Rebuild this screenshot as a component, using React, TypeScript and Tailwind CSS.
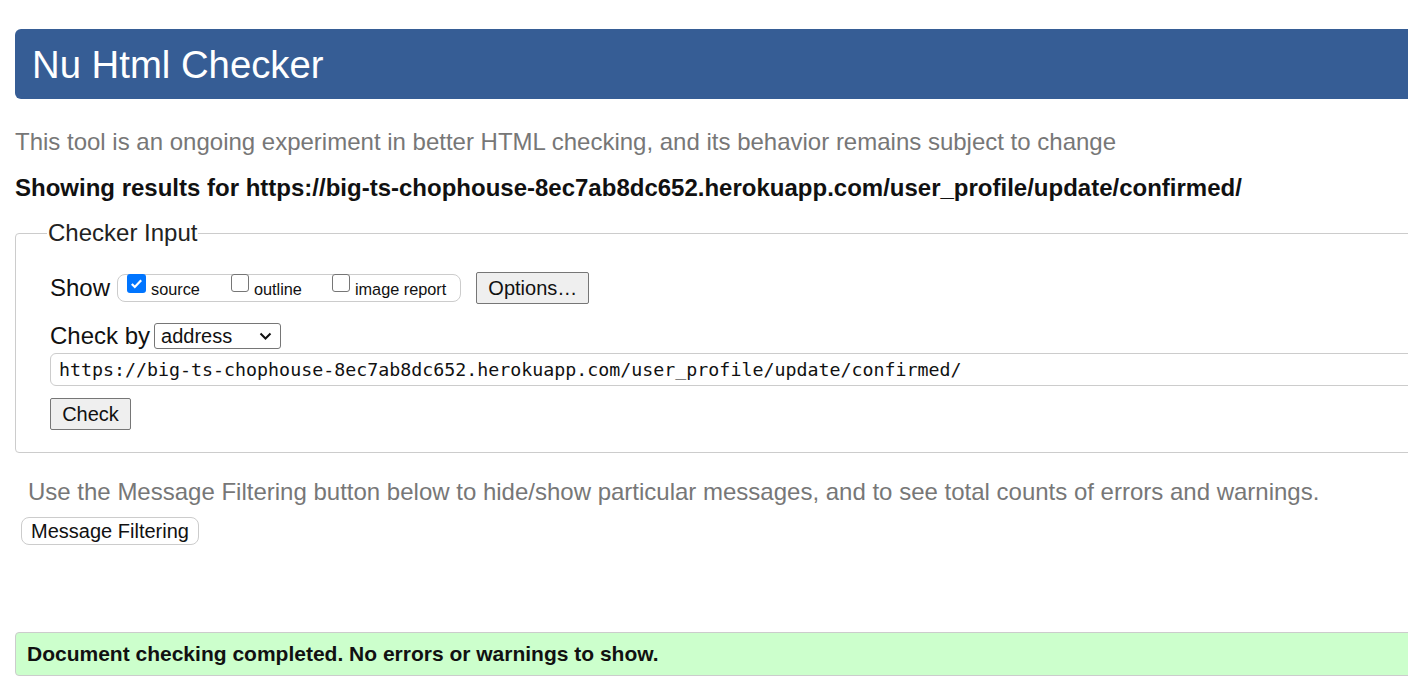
import React from "react";

const url = "https://big-ts-chophouse-8ec7ab8dc652.herokuapp.com/user_profile/update/confirmed/";

function Box({ checked }: { checked?: boolean }) {
  if (checked) {
    return (
      <span className="inline-flex w-[19px] h-[19px] rounded-[3px] bg-[#0075ff] items-center justify-center mr-[5px]">
        <svg width="15" height="15" viewBox="0 0 16 16">
          <path d="M3 8.5l3.2 3.2L13 4.5" fill="none" stroke="white" strokeWidth="2.4" />
        </svg>
      </span>
    );
  }
  return <span className="inline-block w-[18px] h-[18px] rounded-[3px] border border-[#767676] bg-white mr-[5px]" />;
}

export default function App() {
  return (
    <div className="w-[1408px] h-[696px] overflow-hidden bg-white text-[#111] font-['Liberation_Sans',Arial,sans-serif]">
      <div className="w-[1460px] pl-[15px]">
        <div className="mt-[29px] h-[70px] bg-[#365d95] rounded-[6px] flex items-center pl-[17px]">
          <h1 className="text-white text-[38.3px] leading-none mt-[2px]">Nu Html Checker</h1>
        </div>

        <p className="mt-[31px] text-[24px] text-[#777] leading-none">
          This tool is an ongoing experiment in better HTML checking, and its behavior remains subject to change
        </p>
        <p className="mt-[22px] text-[24px] font-bold leading-none">
          Showing results for {url}
        </p>

        <fieldset className="mt-[15px] border border-[#ccc] rounded-[4px] pl-[34px] pb-[22px] pt-[4px]">
          <legend className="text-[24px] px-[1px] -ml-[3px] text-[#222]">Checker Input</legend>
          <div className="flex items-center mt-[15px]">
            <span className="text-[24px]">Show</span>
            <div className="ml-[7px] h-[28px] border border-[#ccc] rounded-[8px] flex items-center pl-[9px] pr-[14px] text-[16.3px]">
              <label className="flex items-start"><Box checked /><span className="mt-[3px]">source</span></label>
              <label className="flex items-start ml-[31px]"><Box /><span className="mt-[3px]">outline</span></label>
              <label className="flex items-start ml-[30px]"><Box /><span className="mt-[3px]">image report</span></label>
            </div>
            <button className="ml-[15px] h-[32px] w-[113px] border border-[#767676] rounded-[2px] bg-[#efefef] text-[20px]">Options…</button>
          </div>

          <div className="flex items-center mt-[12px]">
            <span className="text-[24px]">Check by</span>
            <div className="ml-[4px] w-[127px] h-[26px] border border-[#767676] rounded-[3px] flex items-center justify-between pl-[6px] pr-[8px] text-[20px]">
              <span>address</span>
              <svg width="13" height="9" viewBox="0 0 13 9">
                <path d="M1.5 1.5l5 5 5-5" fill="none" stroke="#111" strokeWidth="2" />
              </svg>
            </div>
          </div>

          <div className="-mt-[1px] h-[33px] border border-[#ccc] rounded-[6px] flex items-center pl-[8px] text-[18.3px] font-['DejaVu_Sans_Mono',monospace]">
            {url}
          </div>

          <button className="mt-[12px] h-[32px] w-[81px] border border-[#767676] rounded-[2px] bg-[#efefef] text-[20px]">Check</button>
        </fieldset>

        <p className="mt-[27px] ml-[13px] text-[24px] text-[#777] leading-none">
          Use the Message Filtering button below to hide/show particular messages, and to see total counts of errors and warnings.
        </p>
        <button className="mt-[13px] ml-[6px] h-[28px] w-[178px] border border-[#ccc] rounded-[8px] bg-white text-[20px] leading-none">
          Message Filtering
        </button>

        <div className="mt-[87px] h-[44px] bg-[#ccffcc] border border-[#ccc] rounded-[4px] flex items-center pl-[11px]">
          <span className="text-[21px] font-bold">Document checking completed. No errors or warnings to show.</span>
        </div>
      </div>
    </div>
  );
}
